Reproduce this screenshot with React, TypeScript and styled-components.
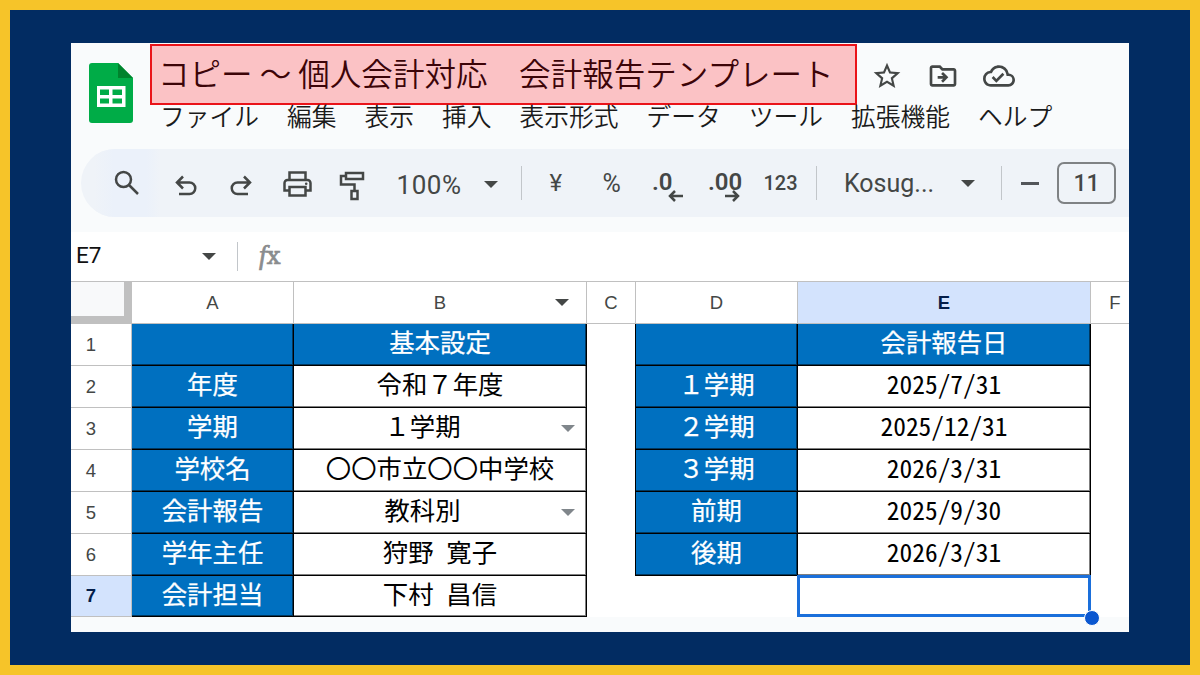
import React from "react";
import styled, { createGlobalStyle, css } from "styled-components";
import { MdStarBorder, MdOutlineDriveFileMove, MdOutlineCloudDone } from "react-icons/md";

const jp = `"Noto Sans CJK JP", sans-serif`;
const ui = `Roboto, "Noto Sans CJK JP", sans-serif`;

const GlobalStyle = createGlobalStyle`
  * { box-sizing: border-box; }
  body { margin: 0; overflow: hidden; }
`;

const Frame = styled.div`
  width: 1200px;
  height: 675px;
  border: 10px solid #f6c429;
  background: #022c62;
  padding: 33px 61px;
`;

const Sheet = styled.main`
  width: 1058px;
  height: 589px;
  background: #f9fbfc;
  overflow: hidden;
  display: flex;
  flex-direction: column;
`;

const Header = styled.header`
  display: flex;
  height: 106px;
  flex: none;
`;

const Logo = styled.svg`
  width: 44px;
  height: 60px;
  margin: 20px 18px 0 18px;
  flex: none;
`;

const Heading = styled.div`
  display: flex;
  flex-direction: column;
`;

const TitleRow = styled.div`
  display: flex;
  align-items: center;
  height: 62px;
`;

const Title = styled.h1`
  margin: 0;
  width: 707px;
  height: 61px;
  margin-left: -1px;
  margin-top: 1px;
  padding-left: 6px;
  border: 2px solid #ea1319;
  background: #fbc2c5;
  color: #3c0408;
  font: 350 31.55px/53px ${jp};
  white-space: pre;
`;

const TitleIcons = styled.div`
  display: flex;
  align-items: center;
  gap: 24px;
  margin: 4px 0 0 14px;
  color: #444746;
  font-size: 32px;
`;

const Menu = styled.nav`
  display: flex;
  gap: 28px;
  margin-top: -2px;
  padding-left: 9px;
  color: #1a1a1a;
  font: 350 24.75px/24px ${jp};
  white-space: nowrap;
`;

const Toolbar = styled.div`
  display: flex;
  align-items: center;
  flex: none;
  height: 68px;
  margin-left: 10px;
  border-radius: 34px 0 0 34px;
  overflow: hidden;
  background: #eff3f8;
  color: #444746;
  font-family: ${ui};
`;

const Tool = styled.div<{ $w: number; $size?: number; $tint?: boolean; $start?: boolean; $drop?: number; $bold?: boolean; $tight?: boolean }>`
  width: ${(p) => p.$w}px;
  height: 68px;
  flex: none;
  display: flex;
  align-items: center;
  justify-content: ${(p) => (p.$start ? "flex-start" : "center")};
  padding-top: ${(p) => p.$drop ?? 0}px;
  font-size: ${(p) => p.$size ?? 24}px;
  font-weight: ${(p) => (p.$bold ? 500 : 400)};
  letter-spacing: ${(p) => (p.$tight ? 0 : 0.5)}px;
  ${(p) => p.$tint && css`background: linear-gradient(90deg, #eff3f8, #ebf1fa 30%, #ebf1fa 80%, #eff3f8);`}
  svg { flex: none; }
`;

const Decimal = styled.div`
  display: flex;
  flex-direction: column;
  height: 34px;
  font-size: 24px;
  font-weight: 600;
  line-height: 28px;
  letter-spacing: 0;
  svg { margin: -6px 2px 0 auto; }
`;

const Divider = styled.i<{ $h: number }>`
  width: 1px;
  flex: none;
  height: ${(p) => p.$h}px;
  background: #c2c6ca;
`;

const Caret = styled.i<{ $color?: string }>`
  width: 0;
  height: 0;
  flex: none;
  border: 7px solid transparent;
  border-top-color: ${(p) => p.$color ?? "#444746"};
  border-bottom-width: 0;
`;

const Minus = styled.i`
  width: 18px;
  height: 3px;
  flex: none;
  margin: 0 18px 0 19px;
  background: #53565a;
`;

const SizeBox = styled.div`
  width: 59px;
  height: 42px;
  flex: none;
  border: 2px solid #7f8284;
  border-radius: 7px;
  font-size: 23px;
  font-weight: 500;
  line-height: 39px;
  text-align: center;
`;

const FormulaBar = styled.div`
  display: flex;
  align-items: center;
  flex: none;
  height: 50px;
  margin-top: 15px;
  padding-left: 5px;
  background: #fff;
  border-bottom: 1px solid #c0c0c0;
`;

const NameBox = styled.div`
  width: 126px;
  font: 22.5px/44px ${ui};
  padding-bottom: 3px;
  color: #111;
`;

const NameGap = styled.div`
  width: 21px;
`;

const Fx = styled.span`
  margin: 0 0 2px 21px;
  font: italic 27px "Liberation Serif", serif;
  color: #8a8c8e;
  -webkit-text-stroke: 0.7px #8a8c8e;
  b {
    font: 400 25px "DejaVu Serif", serif;
  }
`;

const Grid = styled.div`
  display: grid;
  flex: none;
  grid-template-columns: 61px 162px 293px 49px 162px 293px 49px;
  grid-template-rows: repeat(7, 42px) 41px;
  background: #fff;
`;

const Corner = styled.div`
  background: #f8f9fa;
  border-right: 8px solid #c0c0c0;
  border-bottom: 8px solid #c0c0c0;
`;

const ColHead = styled.div<{ $active?: boolean }>`
  position: relative;
  display: flex;
  align-items: center;
  justify-content: center;
  border-right: 1px solid #c0c0c0;
  border-bottom: 1px solid #c0c0c0;
  background: ${(p) => (p.$active ? "#d3e3fd" : "#fff")};
  color: ${(p) => (p.$active ? "#041e49" : "#444746")};
  font: ${(p) => (p.$active ? 700 : 400)} 18.5px "Liberation Sans", sans-serif;
`;

const RowHead = styled(ColHead)`
  padding-right: 20px;
`;

const Cell = styled.div<{ $kind: "blue" | "plain" | "empty"; $half?: boolean; $menu?: boolean; $edge?: boolean }>`
  position: relative;
  display: flex;
  align-items: center;
  justify-content: center;
  white-space: pre;
  font: 400 25.4px/36px ${jp};
  padding: 0 ${(p) => (p.$menu ? 35 : 0)}px 7px 0;
  ${(p) => p.$half && css`font-feature-settings: "hwid";`}
  ${(p) => p.$kind !== "empty" && css`
    border-bottom: 1px solid #000;
    border-right: 1px solid #000;
    box-shadow: inset -1px -1px rgba(0, 0, 0, 0.5);
  `}
  ${(p) => p.$edge && css`
    border-right: 1px solid #000;
  `}
  ${(p) => p.$kind === "blue" && css`
    background: #0070c0;
    color: #fff;
    -webkit-text-stroke: 0.25px #fff;
  `}
  ${(p) => p.$kind === "plain" && css`color: #000;`}
`;

const CaretSpot = styled.span<{ $right: number }>`
  position: absolute;
  right: ${(p) => p.$right}px;
  top: 17px;
  display: flex;
`;

const Selection = styled.div`
  position: relative;
  margin: -1px 0 0 -1px;
  border: 3px solid #1a6fdb;
`;

const Handle = styled.i`
  position: absolute;
  right: -12px;
  bottom: -12px;
  width: 16px;
  height: 16px;
  border: 1px solid #fff;
  border-radius: 50%;
  background: #0b57d0;
`;

const rows: [string, string, string, string, boolean?][] = [
  ["", "基本設定", "", "会計報告日"],
  ["年度", "令和７年度", "１学期", "2025/7/31"],
  ["学期", "１学期", "２学期", "2025/12/31", true],
  ["学校名", "〇〇市立〇〇中学校", "３学期", "2026/3/31"],
  ["会計報告", "教科別", "前期", "2025/9/30", true],
  ["学年主任", "狩野 寛子", "後期", "2026/3/31"],
  ["会計担当", "下村 昌信", "", ""],
];

const menus = ["ファイル", "編集", "表示", "挿入", "表示形式", "データ", "ツール", "拡張機能", "ヘルプ"];

const Stroke = ({ d, w = 26, h = 32 }: { d: string; w?: number; h?: number }) => (
  <svg width={w} height={h} viewBox={`0 0 ${w} ${h}`} fill="none" stroke="#444746" strokeWidth="2.5">
    <path d={d} />
  </svg>
);

export default function App() {
  return (
    <Frame>
      <GlobalStyle />
      <Sheet>
        <Header>
          <Logo viewBox="0 0 44 60">
            <path d="M3 0H29L44 15V57a3 3 0 0 1-3 3H3a3 3 0 0 1-3-3V3a3 3 0 0 1 3-3Z" fill="#00ac47" />
            <path d="M29 0L44 15H29Z" fill="#00832d" />
            <path fillRule="evenodd" fill="#fff" d="M8 23H36.500V44H8ZM11 26.500V32H20V26.500ZM23.500 26.500V32H33V26.500ZM11 35.500V40.500H20V35.500ZM23.500 35.500V40.500H33V35.500Z" />
          </Logo>
          <Heading>
            <TitleRow>
              <Title>コピー ～ 個人会計対応　会計報告テンプレート</Title>
              <TitleIcons>
                <MdStarBorder />
                <MdOutlineDriveFileMove />
                <MdOutlineCloudDone />
              </TitleIcons>
            </TitleRow>
            <Menu>{menus.map((m) => <span key={m}>{m}</span>)}</Menu>
          </Heading>
        </Header>
        <Toolbar>
          <Tool $w={13} />
          <Tool $w={66} $tint>
            <Stroke w={26} h={26} d="M17 9.500a7.500 7.500 0 1 1-15 0a7.500 7.500 0 0 1 15 0M15 15L24 24" />
          </Tool>
          <Tool $w={52} $drop={2}><Stroke w={24} h={24} d="M5 22H15.500a5.750 5.750 0 0 0 0-11.500H3.500M9 4.500L3 10.500L9 16.500" /></Tool>
          <Tool $w={58} $drop={2}><Stroke w={24} h={24} d="M19 22H8.500a5.750 5.750 0 0 1 0-11.500H20.500M15 4.500L21 10.500L15 16.500" /></Tool>
          <Tool $w={55} $drop={2}>
            <svg width="29" height="26" viewBox="0 0 29 26" fill="none" stroke="#444746" strokeWidth="2.5">
              <path d="M6.500 8.500V1.500H22.500V8.500M6.500 19.500H1.500V12a3 3 0 0 1 3-3H24.500a3 3 0 0 1 3 3V19.500H22.500M6.500 16H22.500V24.500H6.500Z" />
              <circle cx="23.200" cy="12.800" r="1.300" fill="#444746" stroke="none" />
            </svg>
          </Tool>
          <Tool $w={54} $drop={5}><Stroke w={26} h={32} d="M7 3H24V9H7ZM7 6H2V14.500H15.500V21M12.500 21H18.500V29H12.500Z" /></Tool>
          <Tool $w={100} $size={26} $drop={4}>100%</Tool>
          <Tool $w={24} $drop={2}><Caret /></Tool>
          <Tool $w={18} />
          <Divider $h={34} />
          <Tool $w={68} $size={24}>¥</Tool>
          <Tool $w={44} $size={25}>%</Tool>
          <Tool $w={18} />
          <Tool $w={56} $start $drop={3}>
            <Decimal>.0&ensp;<Stroke w={15} h={12} d="M15 6H2M7 1L2 6L7 11" /></Decimal>
          </Tool>
          <Tool $w={56} $start $drop={3}>
            <Decimal>.00<Stroke w={15} h={12} d="M0 6H13M8 1L13 6L8 11" /></Decimal>
          </Tool>
          <Tool $w={33} $size={20} $bold $tight>123</Tool>
          <Tool $w={19} />
          <Divider $h={34} />
          <Tool $w={27} />
          <Tool $w={117} $size={25} $start $tight>Kosug...</Tool>
          <Caret />
          <Tool $w={26} />
          <Divider $h={34} />
          <Minus />
          <SizeBox>11</SizeBox>
        </Toolbar>
        <FormulaBar>
          <NameBox>E7</NameBox>
          <Caret />
          <NameGap />
          <Divider $h={29} />
          <Fx>f<b>x</b></Fx>
        </FormulaBar>
        <Grid>
          <Corner />
          {["A", "B", "C", "D", "E", "F"].map((c) => (
            <ColHead key={c} $active={c === "E"}>
              {c}
              {c === "B" && <CaretSpot $right={17}><Caret /></CaretSpot>}
            </ColHead>
          ))}
          {rows.map(([a, b, d, e, menu], i) => (
            <React.Fragment key={i}>
              <RowHead $active={i === 6}>{i + 1}</RowHead>
              <Cell $kind="blue">{a}</Cell>
              <Cell $kind={i === 0 ? "blue" : "plain"} $menu={menu} $half={i > 4}>
                {b}
                {menu && <CaretSpot $right={11}><Caret $color="#80868b" /></CaretSpot>}
              </Cell>
              <Cell $kind="empty" $edge={i < 6} />
              <Cell $kind={i === 6 ? "empty" : "blue"}>{d}</Cell>
              {i === 6 ? <Selection><Handle /></Selection> : <Cell $kind={i === 0 ? "blue" : "plain"} $half>{e}</Cell>}
              <Cell $kind="empty" />
            </React.Fragment>
          ))}
        </Grid>
      </Sheet>
    </Frame>
  );
}
